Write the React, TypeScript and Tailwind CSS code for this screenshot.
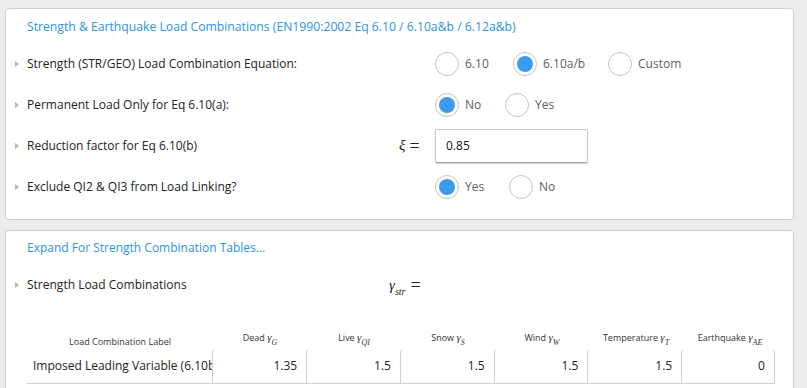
import React from 'react';

const font = { fontFamily: '"Open Sans", "Noto Sans", sans-serif' };
const math = { fontFamily: '"Liberation Serif", "DejaVu Serif", serif' };

const Caret = () => (
    <svg width="6" height="8" viewBox="0 0 6 8" className="shrink-0">
        <path d="M1 1 L5 4 L1 7 Z" fill="#b5b5b5" />
    </svg>
);

const Radio: React.FC<{ label: string; checked?: boolean; w?: string }> = ({ label, checked, w = '' }) => (
    <div className={`flex items-center ${w}`}>
        <div className="w-[24px] h-[24px] rounded-full border border-[#c4c4c4] bg-white flex items-center justify-center shrink-0">
            {checked && <div className="w-[16px] h-[16px] rounded-full bg-[#3a9bec]" />}
        </div>
        <span className="ml-[6px] text-[12px] text-[#5e5e5e]">{label}</span>
    </div>
);

const Label: React.FC<{ text: string; w?: string }> = ({ text, w = 'w-[408px]' }) => (
    <>
        <div className="w-[21px] flex pl-[8px]"><Caret /></div>
        <div className={`${w} text-[12px] text-[#222]`}>{text}</div>
    </>
);

const Gamma: React.FC<{ sub: string }> = ({ sub }) => (
    <span className="italic" style={math}>
        <span className="text-[11px]">γ</span>
        <sub className="text-[8px] align-[-2px]">{sub}</sub>
    </span>
);

const cols = [
    { name: 'Dead', sub: 'G', v: '1.35' },
    { name: 'Live', sub: 'QI', v: '1.5' },
    { name: 'Snow', sub: 'S', v: '1.5' },
    { name: 'Wind', sub: 'W', v: '1.5' },
    { name: 'Temperature', sub: 'T', v: '1.5' },
    { name: 'Earthquake', sub: 'AE', v: '0' },
];

export default function App() {
    return (
        <div className="w-[807px] h-[388px] bg-[#ececec] overflow-hidden" style={font}>
            <div className="pl-[5px] pr-[13px] pt-[8px]">
                {/* Combinations card */}
                <div className="bg-white border border-[#cfcfcf] rounded-[4px] h-[212px]">
                    <div className="pl-[21px] pt-[9px] h-[34px] text-[12.2px] text-[#2a93e6]">
                        Strength &amp; Earthquake Load Combinations (EN1990:2002 Eq 6.10 / 6.10a&amp;b / 6.12a&amp;b)
                    </div>
                    <div className="flex items-center h-[41px]">
                        <Label text="Strength (STR/GEO) Load Combination Equation:" />
                        <Radio label="6.10" w="w-[78px]" />
                        <Radio label="6.10a/b" checked w="w-[95px]" />
                        <Radio label="Custom" />
                    </div>
                    <div className="flex items-center h-[41px]">
                        <Label text="Permanent Load Only for Eq 6.10(a):" />
                        <Radio label="No" checked w="w-[70px]" />
                        <Radio label="Yes" />
                    </div>
                    <div className="flex items-center h-[41px]">
                        <Label text="Reduction factor for Eq 6.10(b)" w="w-[372px]" />
                        <div className="w-[36px] flex items-center text-[#222]" style={math}>
                            <span className="italic text-[15px]">ξ</span>
                            <span className="ml-[4px] text-[18px] leading-none">=</span>
                        </div>
                        <div className="w-[153px] h-[34px] border border-[#c8c8c8] border-b-[#aaa] rounded-[2px] shadow-[0_1px_1px_rgba(0,0,0,0.2)] flex items-center pl-[10px] text-[12px] text-[#111]">
                            0.85
                        </div>
                    </div>
                    <div className="flex items-center h-[41px]">
                        <Label text="Exclude QI2 & QI3 from Load Linking?" />
                        <Radio label="Yes" checked w="w-[74px]" />
                        <Radio label="No" />
                    </div>
                </div>

                {/* Tables card */}
                <div className="mt-[10px] bg-white border border-[#cfcfcf] rounded-[4px] h-[200px]">
                    <div className="pl-[21px] pt-[8px] h-[35px] text-[12px] text-[#2a93e6]">
                        Expand For Strength Combination Tables...
                    </div>
                    <div className="flex items-center h-[38px]">
                        <Label text="Strength Load Combinations" w="w-[362px]" />
                        <div className="flex items-center text-[#222]" style={math}>
                            <span className="italic text-[15px]">γ<sub className="text-[10px] align-[-3px]">str</sub></span>
                            <span className="ml-[5px] text-[18px] leading-none">=</span>
                        </div>
                    </div>
                    <div className="pl-[21px] pt-[21px]">
                        <div className="flex items-end h-[24px]">
                            <div className="w-[186px] text-center text-[9px] text-[#333] pb-[1px]">Load Combination Label</div>
                            {cols.map((c) => (
                                <div key={c.name} className="w-[94px] text-center text-[9px] text-[#333] pb-[4px]">
                                    {c.name} <Gamma sub={c.sub} />
                                </div>
                            ))}
                        </div>
                        <div className="flex h-[35px] w-[748px] border-b border-[#d0d0d0]">
                            <div className="w-[186px] overflow-hidden whitespace-nowrap pl-[6px] flex items-center text-[12px] text-[#222]">
                                Imposed Leading Variable (6.10b)
                            </div>
                            {cols.map((c, i) => (
                                <div
                                    key={c.name}
                                    className={`w-[94px] border-l border-[#d0d0d0] rounded-tl-[4px] flex items-center justify-end pr-[9px] text-[12px] text-[#222] ${i === cols.length - 1 ? 'border-r rounded-tr-[4px]' : ''}`}
                                >
                                    {c.v}
                                </div>
                            ))}
                        </div>
                    </div>
                </div>
            </div>
        </div>
    );
}
